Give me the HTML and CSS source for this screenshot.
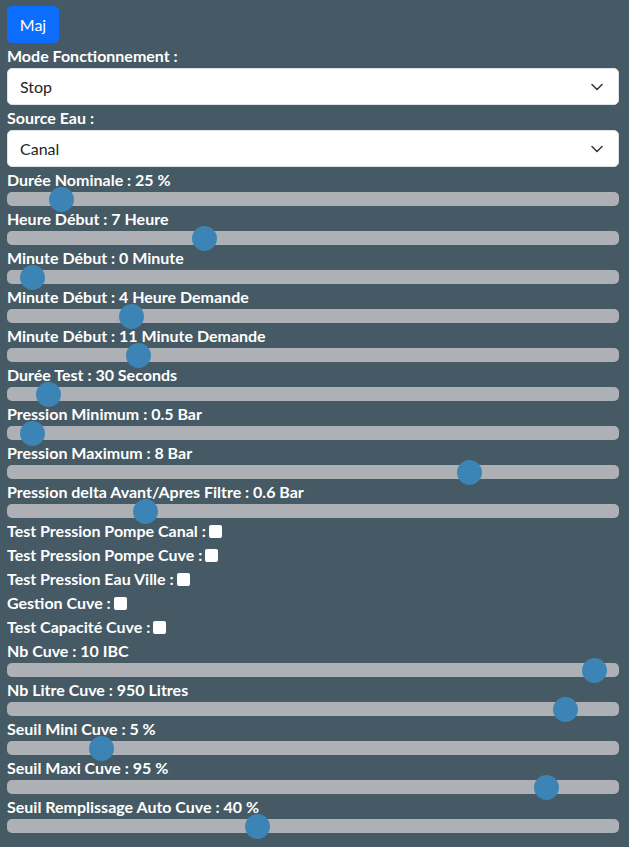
FILE: index.html
```html
<!DOCTYPE html>
<html lang="fr">
<head>
<meta charset="utf-8">
<title>Réglages</title>
<link rel="stylesheet" href="styles.css">
</head>
<body>
<main class="panel">
  <button class="btn">Maj</button>

  <label class="lbl">Mode Fonctionnement :</label>
  <div class="select-wrap">
    <select class="sel"><option>Stop</option></select>
    <svg class="chev" width="12" height="8" viewBox="0 0 12 8"><polyline points="1,1.5 6,6.5 11,1.5" fill="none" stroke="#343a40" stroke-width="1.6" stroke-linecap="round" stroke-linejoin="round"/></svg>
  </div>

  <label class="lbl">Source Eau :</label>
  <div class="select-wrap">
    <select class="sel"><option>Canal</option></select>
    <svg class="chev" width="12" height="8" viewBox="0 0 12 8"><polyline points="1,1.5 6,6.5 11,1.5" fill="none" stroke="#343a40" stroke-width="1.6" stroke-linecap="round" stroke-linejoin="round"/></svg>
  </div>

  <label class="lbl">Durée Nominale : 25 %</label>
  <input class="rng" type="range" min="0" max="1000" value="72">
  <label class="lbl">Heure Début : 7 Heure</label>
  <input class="rng" type="range" min="0" max="1000" value="316">
  <label class="lbl">Minute Début : 0 Minute</label>
  <input class="rng" type="range" min="0" max="1000" value="22">
  <label class="lbl">Minute Début : 4 Heure Demande</label>
  <input class="rng" type="range" min="0" max="1000" value="190">
  <label class="lbl">Minute Début : 11 Minute Demande</label>
  <input class="rng" type="range" min="0" max="1000" value="202">
  <label class="lbl">Durée Test : 30 Seconds</label>
  <input class="rng" type="range" min="0" max="1000" value="50">
  <label class="lbl">Pression Minimum : 0.5 Bar</label>
  <input class="rng" type="range" min="0" max="1000" value="22">
  <label class="lbl">Pression Maximum : 8 Bar</label>
  <input class="rng" type="range" min="0" max="1000" value="766">
  <label class="lbl">Pression delta Avant/Apres Filtre : 0.6 Bar</label>
  <input class="rng" type="range" min="0" max="1000" value="214">

  <label class="chk-row">Test Pression Pompe Canal :<input class="chk" type="checkbox"></label>
  <label class="chk-row">Test Pression Pompe Cuve :<input class="chk" type="checkbox"></label>
  <label class="chk-row">Test Pression Eau Ville :<input class="chk" type="checkbox"></label>
  <label class="chk-row">Gestion Cuve :<input class="chk" type="checkbox"></label>
  <label class="chk-row">Test Capacité Cuve :<input class="chk" type="checkbox"></label>

  <label class="lbl">Nb Cuve : 10 IBC</label>
  <input class="rng" type="range" min="0" max="1000" value="979">
  <label class="lbl">Nb Litre Cuve : 950 Litres</label>
  <input class="rng" type="range" min="0" max="1000" value="931">
  <label class="lbl">Seuil Mini Cuve : 5 %</label>
  <input class="rng" type="range" min="0" max="1000" value="139">
  <label class="lbl">Seuil Maxi Cuve : 95 %</label>
  <input class="rng" type="range" min="0" max="1000" value="897">
  <label class="lbl">Seuil Remplissage Auto Cuve : 40 %</label>
  <input class="rng" type="range" min="0" max="1000" value="405">
</main>
</body>
</html>
```
FILE: styles.css
```css
html {
  background: #465a65;
}
body {
  margin: 0;
  background: #465a65;
  font-family: Lato, "Liberation Sans", sans-serif;
  color: #ffffff;
}
.panel {
  display: flex;
  flex-direction: column;
  align-items: flex-start;
  padding: 6px 10px 8px 7px;
  width: 612px;
}
.btn {
  font-family: Lato, "Liberation Sans", sans-serif;
  font-size: 16px;
  color: #ffffff;
  background: #0d6efd;
  border: none;
  border-radius: 5px;
  width: 52px;
  height: 37px;
  padding: 0;
  margin: 0 0 3px 0;
}
.lbl {
  display: block;
  font-size: 16px;
  font-weight: 700;
  line-height: 18px;
  height: 17px;
  padding-top: 1px;
  margin-bottom: 4px;
  white-space: nowrap;
}
.select-wrap {
  position: relative;
  width: 612px;
  margin-bottom: 3px;
}
.sel {
  display: block;
  width: 612px;
  height: 37px;
  margin: 0;
  -webkit-appearance: none;
  appearance: none;
  background: #ffffff;
  border: 1px solid #dee2e6;
  border-radius: 5px;
  padding: 0 36px 0 12px;
  font-family: Lato, "Liberation Sans", sans-serif;
  font-size: 16px;
  color: #212529;
}
.chev {
  position: absolute;
  right: 16px;
  top: 15px;
  pointer-events: none;
}
.rng {
  -webkit-appearance: none;
  appearance: none;
  display: block;
  width: 612px;
  height: 14px;
  margin: 0 0 3px 0;
  padding: 0;
  background: transparent;
}
.rng::-webkit-slider-runnable-track {
  height: 14px;
  background: #adb1b5;
  border-radius: 5px;
  border: none;
}
.rng::-webkit-slider-thumb {
  -webkit-appearance: none;
  appearance: none;
  width: 25px;
  height: 25px;
  border-radius: 50%;
  background: #3d84b6;
  border: none;
  margin-top: -5.5px;
}
.chk-row {
  display: flex;
  align-items: center;
  height: 18px;
  padding-top: 1px;
  margin-bottom: 5px;
  font-size: 16px;
  font-weight: 700;
  line-height: 18px;
  white-space: nowrap;
}
.chk {
  -webkit-appearance: none;
  appearance: none;
  width: 13px;
  height: 13px;
  margin: 1px 0 0 3px;
  background: #ffffff;
  border-radius: 2px;
  border: none;
}
```
